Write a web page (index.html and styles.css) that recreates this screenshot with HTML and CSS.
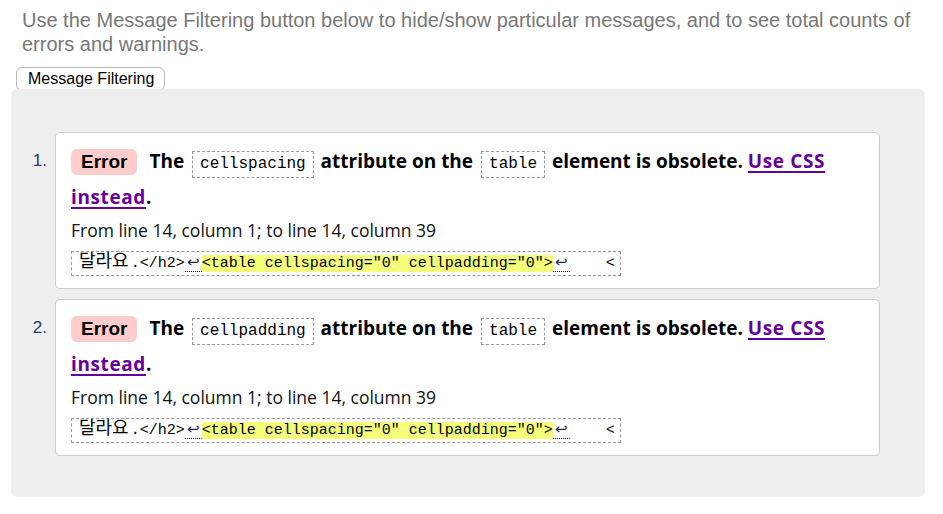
FILE: index.html
```html
<!DOCTYPE html>
<html lang="en">
<head>
<meta charset="utf-8">
<title>Messages</title>
<link rel="stylesheet" href="styles.css">
</head>
<body>
<p class="intro">Use the Message Filtering button below to hide/show particular messages, and to see total counts of errors and warnings.</p>
<button class="filter-btn" type="button">Message Filtering</button>
<div class="panel">
  <ol class="messages">
    <li class="item">
      <span class="num">1.</span>
      <div class="card">
        <p class="message"><span class="badge">Error</span> The <code class="attr">cellspacing</code> attribute on the <code class="attr">table</code> element is obsolete. <a class="link" href="#">Use CSS instead</a>.</p>
        <p class="location">From line 14, column 1; to line 14, column 39</p>
        <p class="extract"><code><span class="ko">달라요</span>.&lt;/h2&gt;<span class="lf">↩</span><b class="hl">&lt;table cellspacing="0" cellpadding="0"&gt;</b><span class="lf">↩</span>    &lt;</code></p>
      </div>
    </li>
    <li class="item">
      <span class="num">2.</span>
      <div class="card">
        <p class="message"><span class="badge">Error</span> The <code class="attr">cellpadding</code> attribute on the <code class="attr">table</code> element is obsolete. <a class="link" href="#">Use CSS instead</a>.</p>
        <p class="location">From line 14, column 1; to line 14, column 39</p>
        <p class="extract"><code><span class="ko">달라요</span>.&lt;/h2&gt;<span class="lf">↩</span><b class="hl">&lt;table cellspacing="0" cellpadding="0"&gt;</b><span class="lf">↩</span>    &lt;</code></p>
      </div>
    </li>
  </ol>
</div>
</body>
</html>
```

FILE: styles.css
```css
html, body {
  margin: 0;
  padding: 0;
  background: #fff;
}

body {
  padding: 8px 18px 0 11px;
  font-family: "Liberation Sans", Arial, sans-serif;
}

.intro {
  margin: 0 0 0 11px;
  font-size: 20px;
  line-height: 24px;
  color: #777;
}

.filter-btn {
  display: block;
  margin: 11px 0 -2px 5px;
  height: 24px;
  padding: 0 10px 0 11px;
  font-family: "Liberation Sans", Arial, sans-serif;
  font-size: 16px;
  color: #000;
  background: #fff;
  border: 1px solid #bbb;
  border-radius: 6px;
}

.panel {
  background: #eee;
  border-radius: 7px;
  padding: 43px 45px 41px 0;
}

.messages {
  list-style: none;
  margin: 0;
  padding: 0;
  display: flex;
  flex-direction: column;
  gap: 10px;
}

.item {
  display: flex;
  align-items: flex-start;
}

.num {
  width: 36px;
  flex: none;
  padding-right: 8px;
  padding-top: 19px;
  text-align: right;
  font-size: 17px;
  color: #243a6c;
}

.card {
  flex: 1;
  background: #fff;
  border: 1px solid #ccc;
  border-radius: 5px;
  padding: 10px 16px 12px 15px;
  font-family: "Open Sans", "Noto Sans CJK KR", sans-serif;
  color: #000;
}

.message {
  margin: 0;
  font-size: 19px;
  font-weight: 700;
  line-height: 36px;
}

.badge {
  display: inline-block;
  padding: 0 10px;
  line-height: 26px;
  background: #fcc;
  border-radius: 6px;
  font-family: "Liberation Sans", Arial, sans-serif;
  font-size: 19px;
  margin-right: 7px;
}

.attr {
  display: inline-block;
  padding: 0 7px;
  line-height: 25px;
  border: 1px dashed #999;
  font-family: "Liberation Mono", monospace;
  font-size: 16px;
  font-weight: 400;
  margin: 0 2px 0 3px;
}

.link {
  color: #609;
  text-decoration-thickness: 2px;
  text-underline-offset: 3px;
  letter-spacing: 0.6px;
}

.location {
  margin: 1px 0 0;
  font-size: 17.5px;
  line-height: 28px;
  font-weight: 400;
  color: #111;
}

.extract {
  display: flex;
  margin: 7px 0 0;
}

.extract code {
  display: block;
  height: 25px;
  box-sizing: border-box;
  padding: 0 5px 0 7px;
  line-height: 23px;
  border: 1px dashed #999;
  font-family: "Liberation Mono", "Noto Sans CJK KR", monospace;
  font-size: 15px;
  white-space: pre;
  color: #000;
}

.ko {
  font-size: 18px;
  line-height: 0;
  margin-right: 2px;
}

.hl {
  font-weight: 400;
  background: #f5ff79;
}

.lf {
  display: inline-block;
  width: 17px;
  line-height: 18px;
  border-bottom: 1px dotted #000;
  font-family: "DejaVu Sans", sans-serif;
  font-size: 15px;
  text-align: center;
  color: #1a2a55;
}
```
